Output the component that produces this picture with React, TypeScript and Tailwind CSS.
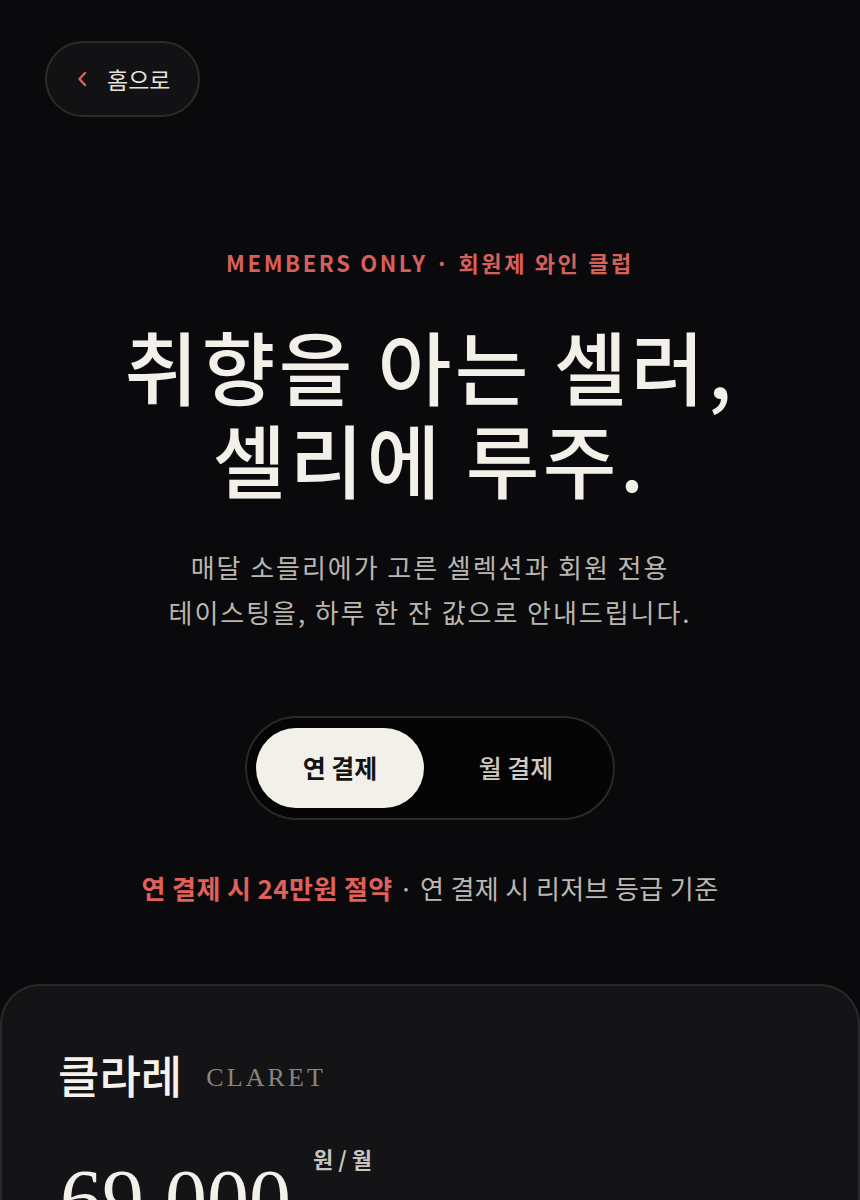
import React from "react";

const sans = '"Noto Sans CJK KR", "Noto Sans", sans-serif';
const serif = '"Liberation Serif", "DejaVu Serif", "Noto Sans CJK KR", serif';

export default function App() {
  return (
    <div className="min-h-[1200px] w-full bg-[#0a0a0c] text-[#f3f0ea]" style={{ fontFamily: sans }}>
      <div className="px-[45px] pt-[41px]">
        <button className="flex h-[76px] items-center gap-[20px] rounded-full border-2 border-[#2c2b2a] bg-[#121214] pl-[30px] pr-[28px] text-[23px] text-[#e6e2dc]">
          <svg width="10" height="16" viewBox="0 0 10 16" fill="none">
            <path d="M8 2L2.5 8L8 14" stroke="#e0605a" strokeWidth="2.4" strokeLinecap="round" strokeLinejoin="round" />
          </svg>
          <span className="leading-none">홈으로</span>
        </button>
      </div>

      <div className="mt-[129px] flex flex-col items-center text-center">
        <p className="text-[22px] font-semibold leading-[32px] tracking-[0.12em] text-[#d9605a]">
          MEMBERS ONLY · 회원제 와인 클럽
        </p>
        <h1 className="mt-[40px] text-[80px] font-medium leading-[93px] tracking-[0.045em] text-[#f3f0ea]">
          취향을 아는 셀러,
          <br />
          셀리에 루주.
        </h1>
        <p className="mt-[40px] text-[26px] leading-[45px] tracking-[0.075em] text-[#bab6b0]">
          매달 소믈리에가 고른 셀렉션과 회원 전용
          <br />
          테이스팅을, 하루 한 잔 값으로 안내드립니다.
        </p>

        <div className="mt-[82px] flex items-center gap-[4px] rounded-full border-2 border-[#2a2928] bg-[#050505] px-[9px] py-[10px]">
          <button className="flex h-[80px] w-[168px] items-center justify-center rounded-full bg-[#f3f0ea] text-[25px] font-bold text-[#141414]">
            연 결제
          </button>
          <button className="flex h-[80px] w-[176px] items-center justify-center rounded-full text-[25px] font-medium text-[#cfcac3]">
            월 결제
          </button>
        </div>

        <p className="mt-[50px] text-[26px] leading-[36px] tracking-[0.015em] text-[#bdb8b2]">
          <span className="font-bold text-[#e0605a]">연 결제 시 24만원 절약</span> · 연 결제 시 리저브 등급 기준
        </p>
      </div>

      <div className="mt-[78px] rounded-t-[40px] border-2 border-b-0 border-[#29292b] bg-[#141416] pb-[60px] pl-[56px] pr-[58px] pt-[60px]">
        <div className="flex items-end gap-[24px]">
          <span className="text-[45px] font-medium leading-[58px] text-[#f5f2ec]">클라레</span>
          <span className="pb-[10px] text-[26px] leading-[32px] tracking-[0.12em] text-[#8a857e]" style={{ fontFamily: serif }}>
            CLARET
          </span>
        </div>
        <div className="mt-[54px] flex items-start gap-[22px] pl-[2px]">
          <span className="text-[84px] leading-[84px] text-[#f3f0ea]" style={{ fontFamily: serif }}>
            69,000
          </span>
          <span className="mt-[-16px] text-[22px] font-bold text-[#c8c4be]">원 / 월</span>
        </div>
      </div>
    </div>
  );
}
